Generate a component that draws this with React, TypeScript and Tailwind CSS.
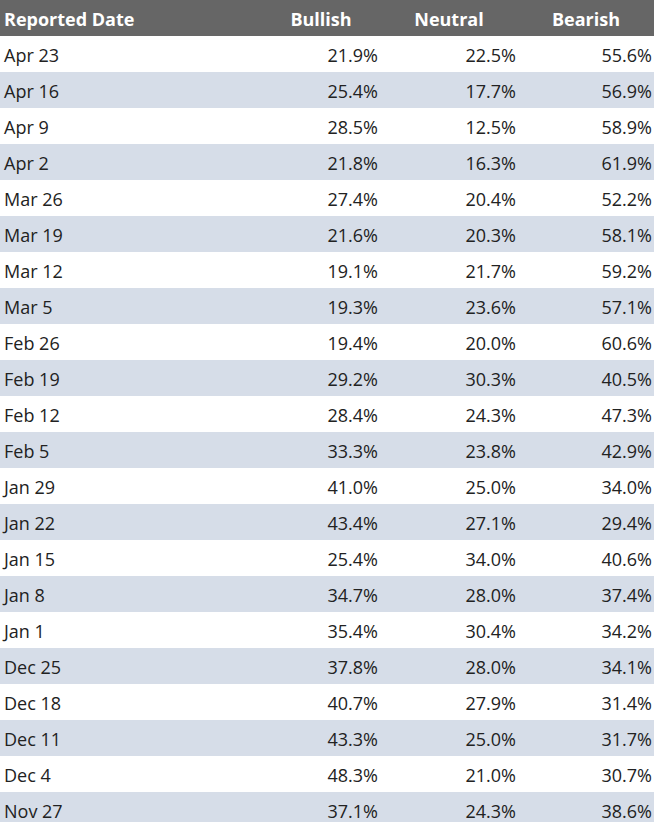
const rows: [string, string, string, string][] = [
  ["Apr 23", "21.9%", "22.5%", "55.6%"],
  ["Apr 16", "25.4%", "17.7%", "56.9%"],
  ["Apr 9", "28.5%", "12.5%", "58.9%"],
  ["Apr 2", "21.8%", "16.3%", "61.9%"],
  ["Mar 26", "27.4%", "20.4%", "52.2%"],
  ["Mar 19", "21.6%", "20.3%", "58.1%"],
  ["Mar 12", "19.1%", "21.7%", "59.2%"],
  ["Mar 5", "19.3%", "23.6%", "57.1%"],
  ["Feb 26", "19.4%", "20.0%", "60.6%"],
  ["Feb 19", "29.2%", "30.3%", "40.5%"],
  ["Feb 12", "28.4%", "24.3%", "47.3%"],
  ["Feb 5", "33.3%", "23.8%", "42.9%"],
  ["Jan 29", "41.0%", "25.0%", "34.0%"],
  ["Jan 22", "43.4%", "27.1%", "29.4%"],
  ["Jan 15", "25.4%", "34.0%", "40.6%"],
  ["Jan 8", "34.7%", "28.0%", "37.4%"],
  ["Jan 1", "35.4%", "30.4%", "34.2%"],
  ["Dec 25", "37.8%", "28.0%", "34.1%"],
  ["Dec 18", "40.7%", "27.9%", "31.4%"],
  ["Dec 11", "43.3%", "25.0%", "31.7%"],
  ["Dec 4", "48.3%", "21.0%", "30.7%"],
  ["Nov 27", "37.1%", "24.3%", "38.6%"],
];

export default function App() {
  return (
    <div className="w-[654px] bg-white font-['Open_Sans',sans-serif] text-[18px] leading-[24px] text-[#222222]">
      <table className="w-full border-collapse table-fixed">
        <colgroup>
          <col className="w-[262px]" />
          <col className="w-[118px]" />
          <col className="w-[138px]" />
          <col className="w-[136px]" />
        </colgroup>
        <thead>
          <tr className="h-[36px] bg-[#666666] text-white font-bold">
            <th className="px-[4px] pt-[2px] text-left">Reported Date</th>
            <th className="pt-[2px] text-center">Bullish</th>
            <th className="pt-[2px] text-center">Neutral</th>
            <th className="pt-[2px] text-center">Bearish</th>
          </tr>
        </thead>
        <tbody>
          {rows.map(([date, bull, neu, bear], i) => (
            <tr key={date} className={i % 2 === 1 ? "h-[36px] bg-[#d6dde8]" : "h-[36px] bg-white"}>
              <td className="px-[4px] pt-[2px] text-left">{date}</td>
              <td className="pr-[2px] pt-[2px] text-right">{bull}</td>
              <td className="pr-[2px] pt-[2px] text-right">{neu}</td>
              <td className="pr-[2px] pt-[2px] text-right">{bear}</td>
            </tr>
          ))}
        </tbody>
      </table>
    </div>
  );
}
